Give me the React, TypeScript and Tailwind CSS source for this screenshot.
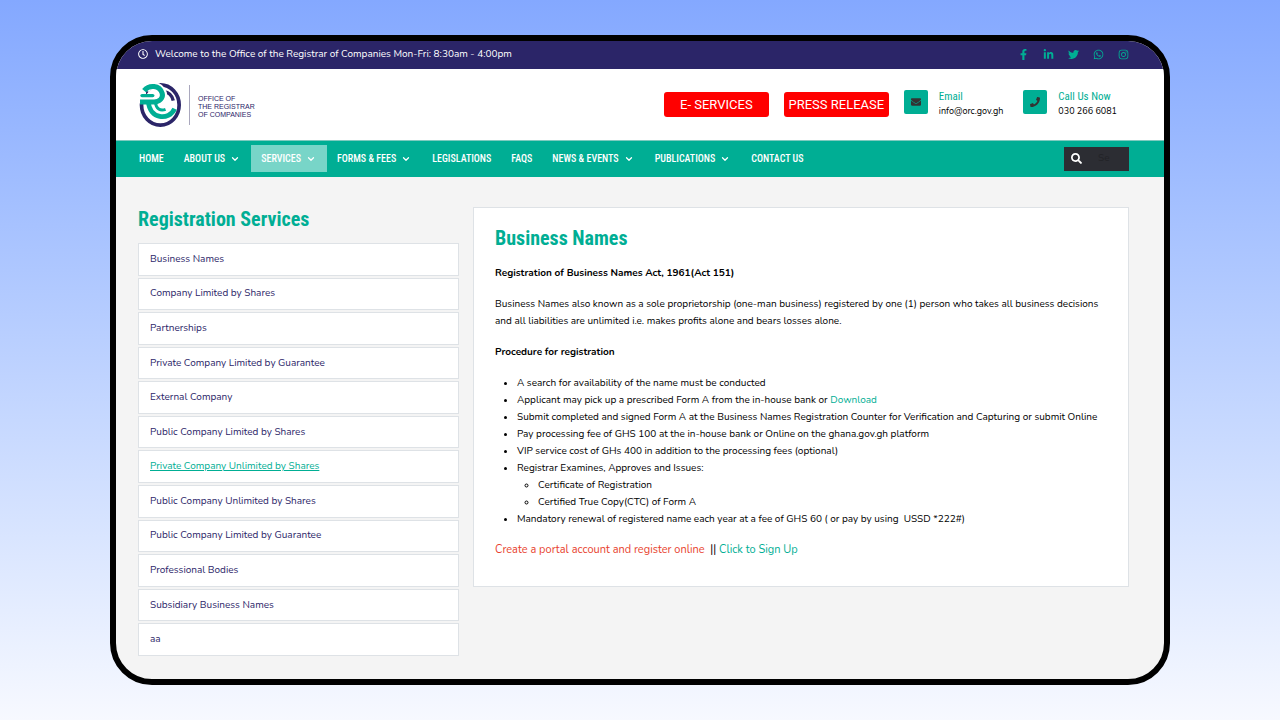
import { FaEnvelope, FaFacebookF, FaInstagram, FaLinkedinIn, FaPhone, FaRegClock, FaSearch, FaTwitter, FaWhatsapp } from 'react-icons/fa';
import { FiChevronDown } from 'react-icons/fi';

interface NavItem {
    label: string;
    hasMenu?: boolean;
    active?: boolean;
}

const navItems: NavItem[] = [
    { label: 'HOME' },
    { label: 'ABOUT US', hasMenu: true },
    { label: 'SERVICES', hasMenu: true, active: true },
    { label: 'FORMS & FEES', hasMenu: true },
    { label: 'LEGISLATIONS' },
    { label: 'FAQS' },
    { label: 'NEWS & EVENTS', hasMenu: true },
    { label: 'PUBLICATIONS', hasMenu: true },
    { label: 'CONTACT US' },
];

const services = [
    'Business Names',
    'Company Limited by Shares',
    'Partnerships',
    'Private Company Limited by Guarantee',
    'External Company',
    'Public Company Limited by Shares',
    'Private Company Unlimited by Shares',
    'Public Company Unlimited by Shares',
    'Public Company Limited by Guarantee',
    'Professional Bodies',
    'Subsidiary Business Names',
    'aa',
];

const hovered = 'Private Company Unlimited by Shares';

const socials = [
    { name: 'Facebook', Icon: FaFacebookF },
    { name: 'LinkedIn', Icon: FaLinkedinIn },
    { name: 'Twitter', Icon: FaTwitter },
    { name: 'WhatsApp', Icon: FaWhatsapp },
    { name: 'Instagram', Icon: FaInstagram },
];

const contacts = [
    { title: 'Email', value: 'info@orc.gov.gh', href: 'mailto:info@orc.gov.gh', Icon: FaEnvelope },
    { title: 'Call Us Now', value: '030 266 6081', href: 'tel:0302666081', Icon: FaPhone },
];

function Logo() {
    return (
        <a href="#" className="flex items-center">
            <svg className="h-[46px] w-[43px]" viewBox="5 6 128 134" fill="none" aria-hidden="true">
                <ellipse cx="68.5" cy="73" rx="56" ry="60" stroke="#2b2568" strokeWidth="11" />
                <path d="M78 33 C94 35 104 45 107 60" stroke="#2b2568" strokeWidth="10" />
                {/* white gap between the ring and the green letters */}
                <path d="M24 26 C40 10 68 14 76 38 C80 54 68 68 50 66" stroke="#ffffff" strokeWidth="24" />
                <path d="M5 30 L26 12 V68 H5 Z" fill="#ffffff" />
                <path d="M20 30 C36 12 66 14 74 38 C78 52 66 64 50 64 H8" stroke="#00ae94" strokeWidth="15" />
                <path d="M14 45 H46" stroke="#00ae94" strokeWidth="10" strokeLinecap="round" />
                <path d="M33 64 C36 114 94 122 111 84" stroke="#00ae94" strokeWidth="14" />
                <path d="M54 66 C56 84 68 92 84 86" stroke="#00ae94" strokeWidth="9" />
            </svg>
            <span className="ml-[7px] h-10 w-px bg-[#a9a7bd]" />
            <span className="ml-2 pt-1 text-[7px] leading-[8px] font-['Liberation_Sans'] text-[#2b2568]">
                OFFICE OF<br />THE REGISTRAR<br />OF COMPANIES
            </span>
        </a>
    );
}

export default function App() {
    return (
        <div className="flex min-h-screen flex-col bg-linear-to-b from-[#84a8ff] to-[#f7f9ff] px-[110px] py-[35px] font-['Nunito','Lato',sans-serif] text-[10px] text-black">
            <div className="grow overflow-hidden rounded-[42px] border-[6px] border-black bg-[#f4f4f4]">
                <div className="flex h-7 items-center justify-between bg-[#2b2568] pr-[35px] pb-[2px] pl-[22px] text-white">
                    <p className="flex items-center gap-[7px]">
                        <FaRegClock className="size-[10px]" />
                        Welcome to the Office of the Registrar of Companies Mon-Fri: 8:30am - 4:00pm
                    </p>
                    <div className="flex items-center gap-[14px] text-[#00ae94]">
                        {socials.map(({ name, Icon }) => (
                            <a key={name} href="#" aria-label={name}>
                                <Icon className="block size-[11px]" />
                            </a>
                        ))}
                    </div>
                </div>

                <header className="flex h-[71px] items-center justify-between bg-white pr-[47px] pl-[23px]">
                    <Logo />
                    <div className="flex items-center">
                        <button className="mr-[15px] h-[25px] w-[105px] rounded-[3px] bg-[#ff0000] font-['Roboto'] text-[13px] text-white">E- SERVICES</button>
                        <button className="mr-[15px] h-[25px] w-[105px] rounded-[3px] bg-[#ff0000] font-['Roboto'] text-[13px] whitespace-nowrap text-white">PRESS RELEASE</button>
                        <div className="flex gap-5 pb-[2px]">
                            {contacts.map(({ title, value, href, Icon }) => (
                                <div key={title} className="flex items-start gap-[11px]">
                                    <span className="flex size-6 items-center justify-center rounded-[2px] bg-[#00ae94] text-[#333333]">
                                        <Icon className="size-[10px]" />
                                    </span>
                                    <div className="leading-[14px]">
                                        <p className="font-['Roboto_Condensed','Roboto'] text-[11px] text-[#00ae94]">{title}</p>
                                        <a href={href} className="block text-[9px]">{value}</a>
                                    </div>
                                </div>
                            ))}
                        </div>
                    </div>
                </header>

                <nav className="flex h-[37px] items-center justify-between border-t border-[#7fcabf] bg-[#00ae94] pr-[35px] pb-px pl-[13px] text-white">
                    <ul className="flex font-['Roboto_Condensed','Roboto'] text-[10px] font-medium">
                        {navItems.map(({ label, hasMenu, active }) => (
                            <li key={label}>
                                <a href="#" className={`flex h-[27px] items-center px-[10px] whitespace-nowrap ${active ? 'bg-[#78d5c8]' : ''}`}>
                                    {label}
                                    {hasMenu && <FiChevronDown className="mr-px ml-[5px] size-[10px] stroke-3" />}
                                </a>
                            </li>
                        ))}
                    </ul>
                    <form className="flex h-6 w-[65px] items-center bg-[#2c2d33]">
                        <button type="submit" aria-label="Search" className="px-[7px]">
                            <FaSearch className="size-[11px]" />
                        </button>
                        <input type="search" aria-label="Search the site" placeholder="Se" className="w-full min-w-0 pl-[9px] text-[10px] placeholder:text-[#222327]" />
                    </form>
                </nav>

                <div className="grid grid-cols-[321fr_656fr] items-start gap-[14px] pt-[30px] pr-[35px] pb-[23px] pl-[22px]">
                    <aside>
                        <h2 className="mb-3 font-['Roboto_Condensed','Roboto'] text-[20px] leading-6 font-bold text-[#00ae94]">Registration Services</h2>
                        <ul className="grid h-[413px] auto-rows-fr gap-[2px]">
                            {services.map(service => (
                                <li key={service} className="flex items-center border border-[#dee2e6] bg-white px-[11px]">
                                    <a href="#" className={service === hovered ? 'text-[#00ae94] underline' : 'text-[#2b2568]'}>{service}</a>
                                </li>
                            ))}
                        </ul>
                    </aside>

                    <main className="border border-[#dee2e6] bg-white px-[21px] pt-4 pb-7 leading-[17px]">
                        <h1 className="mb-[13px] font-['Roboto_Condensed','Roboto'] text-[20px] leading-7 font-bold text-[#00ae94]">Business Names</h1>
                        <p className="mb-[14px] font-bold">Registration of Business Names Act, 1961(Act 151)</p>
                        <p className="mb-[14px]">
                            Business Names also known as a sole proprietorship (one-man business) registered by one (1) person who takes all business decisions and all liabilities are unlimited i.e. makes profits alone and bears losses alone.
                        </p>
                        <p className="mb-[14px] font-bold">Procedure for registration</p>
                        <ul className="mb-[13px] list-disc pl-[22px]">
                            <li>A search for availability of the name must be conducted</li>
                            <li>Applicant may pick up a prescribed Form A from the in-house bank or <a href="#" className="text-[#00ae94]">Download</a></li>
                            <li>Submit completed and signed Form A at the Business Names Registration Counter for Verification and Capturing or submit Online</li>
                            <li>Pay processing fee of GHS 100 at the in-house bank or Online on the ghana.gov.gh platform</li>
                            <li>VIP service cost of GHs 400 in addition to the processing fees (optional)</li>
                            <li>
                                Registrar Examines, Approves and Issues:
                                <ul className="list-[circle] pl-[21px]">
                                    <li>Certificate of Registration</li>
                                    <li>Certified True Copy(CTC) of Form A</li>
                                </ul>
                            </li>
                            <li>Mandatory renewal of registered name each year at a fee of GHS 60 ( or pay by using&nbsp; USSD *222#)</li>
                        </ul>
                        <p className="text-[11px]">
                            <a href="#" className="text-[#e83f2e]">Create a portal account and register online</a>&nbsp; || <a href="#" className="text-[#00ae94]">Click to Sign Up</a>
                        </p>
                    </main>
                </div>
            </div>
        </div>
    );
}
